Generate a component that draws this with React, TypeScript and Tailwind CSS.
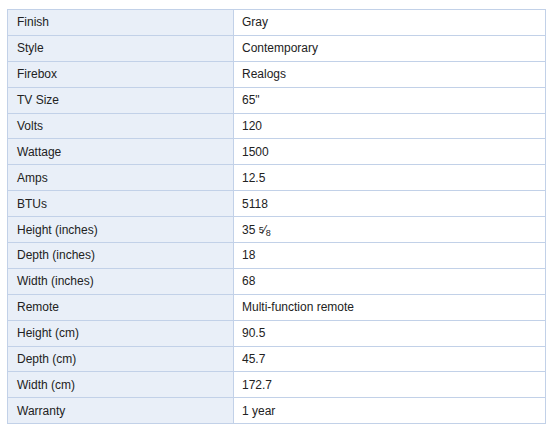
const specs: [string, React.ReactNode][] = [
  ["Finish", "Gray"],
  ["Style", "Contemporary"],
  ["Firebox", "Realogs"],
  ["TV Size", '65"'],
  ["Volts", "120"],
  ["Wattage", "1500"],
  ["Amps", "12.5"],
  ["BTUs", "5118"],
  [
    "Height (inches)",
    <>
      35 <sup className="text-[9px] relative -top-[1px] align-baseline">5</sup>⁄<sub className="text-[9px] align-baseline relative top-[2px]">8</sub>
    </>,
  ],
  ["Depth (inches)", "18"],
  ["Width (inches)", "68"],
  ["Remote", "Multi-function remote"],
  ["Height (cm)", "90.5"],
  ["Depth (cm)", "45.7"],
  ["Width (cm)", "172.7"],
  ["Warranty", "1 year"],
];

export default function App() {
  return (
    <div className="w-[552px] h-[430px] bg-white pt-[9px] pl-[7px]">
      <table
        className="border-collapse w-[539px] text-[12px] text-[#222]"
        style={{ fontFamily: '"Liberation Sans", Arial, sans-serif' }}
      >
        <tbody>
          {specs.map(([label, value]) => (
            <tr key={label} className="h-[25.9px]">
              <td className="w-[226px] bg-[#e9eff8] border border-[#c2d1e8] pl-[9px] py-0 leading-[14px]">
                {label}
              </td>
              <td className="border border-[#c2d1e8] pl-[8px] py-0 leading-[14px]">
                {value}
              </td>
            </tr>
          ))}
        </tbody>
      </table>
    </div>
  );
}
